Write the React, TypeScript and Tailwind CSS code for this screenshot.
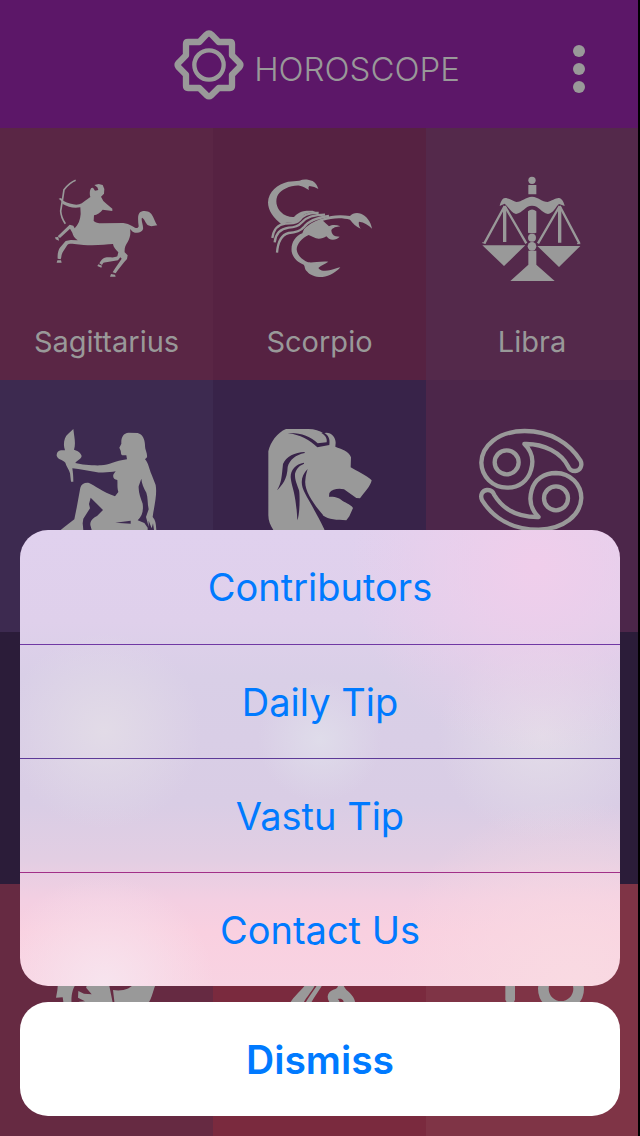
import React, { useState } from "react";

interface Sign {
  id: string;
  name?: string;
  color: string;
  art?: React.ReactNode;
  viewBox?: string;
}

const Centaur = (
  <>
    <path
      d="M105 46 C94 50 80 62 70 74 L66 101 L60 138 C61 154 67 166 74 176"
      fill="none"
      stroke="currentColor"
      strokeWidth="5"
    />
    <path d="M54 101 L61 99 L69 108 C84 116 102 121 116 118 C126 115 136 104 149 96 C146 86 147 75 152 69 L157 68 L163 77 L173 75 L170 67 L161 60 L174 57 L186 60 L191 72 L190 86 L181 95 L188 108 L198 117 L215 131 L215 138 L186 134 C180 143 168 149 160 151 L159 168 C164 173 172 175 184 175 L248 174 C258 175 266 179 274 183 C284 190 292 192 294 184 C292 168 290 149 298 142 C307 136 321 137 329 144 C338 151 342 171 350 181 L332 184 L322 181 C314 174 311 160 304 158 C300 164 309 181 307 193 C303 203 289 207 276 200 L268 192 C271 206 268 219 261 231 C254 241 251 250 252 262 L261 271 L259 282 C249 293 235 310 225 325 L216 322 C223 309 235 293 243 281 L239 277 L232 286 L196 292 C189 292 187 294 184 300 L176 295 C180 288 186 279 192 278 C207 275 220 280 230 274 L233 262 C225 254 218 246 217 237 C190 239 151 244 101 237 C92 237 86 235 80 240 L66 262 C61 271 63 278 60 283 L51 281 C50 270 52 258 57 249 L75 228 L90 225 L111 226 C101 219 97 211 95 203 L88 191 L58 219 L51 214 L87 179 L98 182 L102 190 C112 180 119 165 120 147 L119 127 C98 131 83 126 66 117 L62 108 Z" />
    <path d="M43 217 L53 216 L55 227 L45 223 Z M50 286 L61 286 L63 293 L48 293 Z M173 298 L184 302 L182 308 L170 303 Z M211 327 L223 329 L225 335 L208 335 Z" />
  </>
);

const Scorpion = (
  <>
    <path d="M78 179 C52 159 36 137 36 112 C37 79 65 58 96 50 L130 47 C144 41 158 44 170 48 C180 55 185 64 187 72 C179 68 171 64 160 63 C157 65 157 70 159 75 C149 70 143 64 131 62 C104 60 78 73 66 89 C57 105 61 127 74 140 C85 152 101 157 114 156 C123 144 139 138 152 137 L170 137 L181 142 C164 140 154 143 144 149 C134 157 130 166 120 171 C104 174 92 169 78 179 Z" />
    <g fill="none" stroke="currentColor" strokeWidth="7">
      <path d="M49 219 C53 192 68 178 88 176 C105 174 119 178 130 166 C141 150 158 142 188 144" />
      <path d="M56 232 C59 204 76 191 98 188 C117 188 128 183 138 172 C151 156 172 149 207 149" />
      <path d="M63 263 C66 224 78 209 98 204 C123 203 134 198 143 187 C157 167 183 158 219 153" />
    </g>
    <path d="M144 193 C162 174 181 166 202 160 C224 151 250 149 282 153 C289 145 301 142 315 146 C331 152 345 170 348 191 C338 180 325 172 309 170 C307 176 309 184 314 191 C300 185 291 175 282 164 C259 157 229 158 201 167 L209 175 L219 184 C229 178 241 179 253 184 C241 185 230 188 226 196 C226 204 231 212 239 214 L251 215 C243 224 229 227 219 221 L211 214 C201 221 184 224 173 217 L158 210 C137 219 123 237 122 253 C124 272 137 281 149 289 C164 297 181 288 217 290 C209 297 194 301 187 309 C193 319 210 319 224 315 C235 312 243 309 253 307 C242 320 221 334 200 336 C179 337 162 330 154 320 C145 313 148 305 143 299 C125 291 111 280 107 260 C104 235 117 213 139 205 Z" />
  </>
);

const Scales = (
  <>
    <circle cx="185" cy="46" r="11" />
    <path d="M174 60 H198 V88 H174 Z M173 139 Q185 128 198 139 V203 Q186 207 173 203 Z" />
    <path d="M88 123 C91 109 97 99 104 99 C113 98 127 108 138 111 C155 110 166 96 185 95 C204 96 215 111 232 111 C243 108 257 98 266 99 C275 101 281 111 283 123 L266 117 C255 127 249 145 233 147 C211 142 207 122 185 122 C165 122 158 143 137 147 C121 143 113 123 103 116 Z" />
    <g fill="none" stroke="currentColor" strokeWidth="7">
      <path d="M103 123 L42 235 M103 123 L168 235" />
      <path d="M268 123 L203 235 M268 123 L327 235" />
      <path d="M103 125 V231 M268 125 V233" strokeWidth="10" />
    </g>
    <circle cx="185" cy="218" r="12" />
    <circle cx="185" cy="244" r="13" />
    <path d="M36 241 H165 L101 303 Z M201 243 H330 L266 306 Z M174 257 H198 V299 L253 348 H120 L174 299 Z" />
    <path d="M36 233 L45 235 M320 236 H330" stroke="currentColor" strokeWidth="3" />
  </>
);

const Maiden = (
  <>
    <path d="M98 27 C101 52 106 71 100 89 C111 93 120 97 123 108 C121 119 109 120 104 129 C124 134 157 137 181 136 C206 135 222 123 259 118 L257 106 L245 106 C239 102 242 98 240 92 L236 83 L242 71 C241 53 247 39 264 38 L291 39 C306 43 312 57 313 75 C312 90 321 99 319 112 L313 118 C324 129 325 147 333 164 L345 195 C349 219 344 244 338 277 L336 291 C344 300 346 310 347 330 L340 330 L337 310 L333 325 L324 302 L324 320 L316 291 L324 268 C320 250 322 232 317 218 C309 204 303 190 302 176 L294 199 C293 217 300 235 306 251 C309 273 304 289 291 301 L311 309 L321 323 L321 330 H153 L149 315 C148 303 157 294 169 288 L187 270 L150 233 L145 252 L148 265 L128 296 L126 310 L128 330 H60 L72 320 L101 298 L108 263 L119 203 C122 192 133 187 145 189 C160 195 186 216 223 229 L233 216 C229 204 231 191 230 180 C219 179 215 169 219 162 L225 154 C208 157 182 160 161 155 L113 147 L95 145 C97 158 98 169 98 185 L91 185 L88 160 C85 148 77 139 74 128 C64 116 53 121 48 107 C48 93 56 89 73 91 C66 72 71 51 82 42 Z" />
    <path d="M224 308 L270 302 V311 Z" className="text-[#3d2a50]" fill="currentColor" />
  </>
);

const Lion = (
  <>
    <path d="M37 94 C43 67 64 37 90 27 H157 C176 27 191 32 202 40 L211 38 C227 38 239 52 239 68 L238 80 C256 88 278 91 285 112 L284 142 C299 151 334 168 347 181 C344 199 323 219 312 235 L301 234 L264 208 C248 204 228 207 220 219 L219 230 C240 229 252 235 259 242 C272 250 287 255 291 264 L280 289 L271 301 C242 299 219 301 200 286 C190 290 199 308 207 330 H52 C43 317 37 303 37 286 Z" />
    <g className="text-[#382349]" fill="currentColor">
      <path d="M95 39 C132 37 164 48 185 70 L212 67 C214 54 207 45 196 39 L204 38 C217 45 223 56 220 75 L184 82 C162 60 132 44 95 39 Z" />
      <path d="M146 96 C117 97 90 110 81 132 C77 169 77 189 63 211 C78 196 94 178 95 141 C101 119 119 105 146 99 Z" />
      <path d="M144 128 C119 132 104 150 104 171 C106 201 120 214 124 301 C132 280 132 224 129 211 C122 190 116 179 117 161 C121 146 129 138 144 131 Z" />
      <path d="M155 147 C134 168 132 192 147 220 C160 246 178 272 206 330 L220 330 C206 308 198 295 201 285 C172 251 144 212 148 181 C149 166 152 157 155 147 Z" />
    </g>
  </>
);

const Crab = (
  <g fill="none" stroke="currentColor" strokeWidth="13" strokeLinejoin="round">
    <circle cx="109" cy="127" r="36" />
    <circle cx="257" cy="235" r="36" />
    <path d="M162 72 C185 94 191 121 182 150 C173 182 146 204 110 203 C66 202 34 169 33 128 C34 79 82 33 163 33 C241 33 298 70 330 121 C338 137 329 152 315 153 C303 153 297 148 294 140 C273 99 221 70 162 72 Z" />
    <path d="M205 291 C183 270 175 242 184 211 C193 178 222 159 257 159 C300 160 333 193 333 234 C331 285 280 328 205 329 C126 329 69 294 36 242 C28 227 35 212 50 210 C61 209 69 216 72 225 C98 268 142 292 205 291 Z" />
  </g>
);

const Bearer = (
  <>
    <path d="M52 185 L108 185 C94 205 91 225 93 250 H69 L66 229 L46 230 L50 208 Z" />
    <path d="M106 250 L115 242 L133 241 L112 230 L113 210 L130 218 L153 220 L137 201 C133 190 160 185 205 190 L217 250 Z" />
    <path d="M217 207 C247 212 271 202 282 185 H347 C337 207 335 230 321 250 H222 Z" />
  </>
);

const Fish = (
  <>
    <path d="M152 185 H180 C172 208 152 225 140 250 H100 C113 223 139 208 152 185 Z" />
    <path d="M187 185 H202 C194 205 174 225 164 250 H147 C157 225 178 205 187 185 Z" />
    <path d="M247 185 H262 C262 212 294 211 299 250 H264 C264 238 259 230 245 234 C251 238 252 243 248 250 H225 C206 226 216 210 240 203 Q248 197 247 185 Z" />
  </>
);

const Horns = (
  <>
    <path d="M105 185 H134 V236 L128 250 H112 L105 236 Z" />
    <circle cx="272" cy="203" r="53" fill="none" stroke="currentColor" strokeWidth="32" />
  </>
);

const SIGNS: Sign[] = [
  { id: "sagittarius", name: "Sagittarius", color: "bg-[#5a2645]", art: Centaur, viewBox: "4 0 390 375" },
  { id: "scorpio", name: "Scorpio", color: "bg-[#562242]", art: Scorpion, viewBox: "-3 0 390 375" },
  { id: "libra", name: "Libra", color: "bg-[#54294b]", art: Scales, viewBox: "-10 0 390 375" },
  { id: "virgo", color: "bg-[#3d2a50]", art: Maiden, viewBox: "4 -9 390 375" },
  { id: "leo", color: "bg-[#382349]", art: Lion, viewBox: "-3 -9 390 375" },
  { id: "cancer", color: "bg-[#4c264a]", art: Crab, viewBox: "-10 -9 390 375" },
  { id: "gemini", color: "bg-[#2b1c39]" },
  { id: "taurus", color: "bg-[#2b1c39]" },
  { id: "aries", color: "bg-[#2b1c39]" },
  { id: "aquarius", color: "bg-[#662a42]", art: Bearer, viewBox: "4 0 390 375" },
  { id: "pisces", color: "bg-[#7a2a3e]", art: Fish, viewBox: "-3 0 390 375" },
  { id: "capricorn", color: "bg-[#7f3446]", art: Horns, viewBox: "-10 0 390 375" },
];

const ACTIONS = [
  { label: "Contributors", divider: "" },
  { label: "Daily Tip", divider: "border-t border-t-[#7038a4]" },
  { label: "Vastu Tip", divider: "border-t border-t-[#5d3a98]" },
  { label: "Contact Us", divider: "border-t border-t-[#a23088]" },
];

const SunLogo = () => (
  <svg viewBox="0 0 210 210" className="size-[70px]" fill="none" stroke="currentColor" aria-hidden="true">
    <path
      d="M105 10 Q109 10 113 14 L134 36 H168 Q174 36 174 42 V76 L196 98 Q202 105 196 112 L174 134 V168 Q174 174 168 174 H134 L112 196 Q105 202 98 196 L76 174 H42 Q36 174 36 168 V134 L14 112 Q8 105 14 98 L36 76 V42 Q36 36 42 36 H76 L97 14 Q101 10 105 10 Z"
      strokeWidth="19"
      strokeLinejoin="round"
    />
    <circle cx="105" cy="105" r="44" strokeWidth="13" />
  </svg>
);

const SignTile: React.FC<{ sign: Sign }> = ({ sign }) => (
  <div className={`flex flex-col items-center overflow-hidden pt-[37px] ${sign.color}`}>
    {sign.art && (
      <svg viewBox={sign.viewBox} className="h-[125px] w-[130px] shrink-0" fill="currentColor" aria-hidden="true">
        {sign.art}
      </svg>
    )}
    {sign.name && <span className="mt-[34px] text-[29px] leading-9">{sign.name}</span>}
  </div>
);

export default function App() {
  const [open, setOpen] = useState(true);

  return (
    <div className="relative flex min-h-screen flex-col border-r-2 border-black bg-[#2b1c39] font-['Inter','Liberation_Sans',sans-serif] text-[#999999]">
      <header className="grid h-32 grid-cols-[1fr_auto_1fr] items-center bg-[#5c1768] pt-0.5">
        <div className="col-start-2 flex items-center gap-2.5 pr-1">
          <SunLogo />
          <h1 className="pt-2 text-[33px] leading-10 font-light">HOROSCOPE</h1>
        </div>
        <button
          type="button"
          aria-label="Menu"
          onClick={() => setOpen(true)}
          className="mt-2 mr-[53px] flex flex-col gap-1.5 justify-self-end"
        >
          <span className="size-3 rounded-full bg-current" />
          <span className="size-3 rounded-full bg-current" />
          <span className="size-3 rounded-full bg-current" />
        </button>
      </header>

      <main className="grid flex-1 auto-rows-[252px] grid-cols-[213fr_213fr_212fr]">
        {SIGNS.map((sign) => (
          <SignTile key={sign.id} sign={sign} />
        ))}
      </main>

      {/* Action sheet */}
      {open && (
        <div className="absolute -right-0.5 bottom-0 left-0 flex flex-col gap-4 p-5 text-[38px] leading-none text-[#007aff]">
          <div className="flex flex-col overflow-hidden rounded-[28px] bg-[radial-gradient(circle_at_86%_8%,#f0ceeb_0,transparent_28%),radial-gradient(circle_at_14%_44%,#e2dbe7_0,transparent_17%),radial-gradient(circle_at_50%_46%,#dfdcea_0,transparent_16%),radial-gradient(circle_at_87%_45%,#e3dce8_0,transparent_18%),radial-gradient(circle_at_14%_100%,#f7e4ee_0,transparent_16%),radial-gradient(circle_at_92%_100%,#f9dae2_0,transparent_26%),linear-gradient(#e0d1ee_0%,#dfd0eb_20%,#d9cfe7_32%,#d9cde5_60%,#e2cee3_72%,#f3cfe2_81%,#f9d0e0_88%,#f8d3e2_100%)]">
            {ACTIONS.map((action) => (
              <button key={action.label} type="button" className={`h-[114px] ${action.divider}`}>
                {action.label}
              </button>
            ))}
          </div>
          <button
            type="button"
            onClick={() => setOpen(false)}
            className="h-[114px] rounded-[28px] bg-white text-[39px] font-semibold"
          >
            Dismiss
          </button>
        </div>
      )}
    </div>
  );
}
